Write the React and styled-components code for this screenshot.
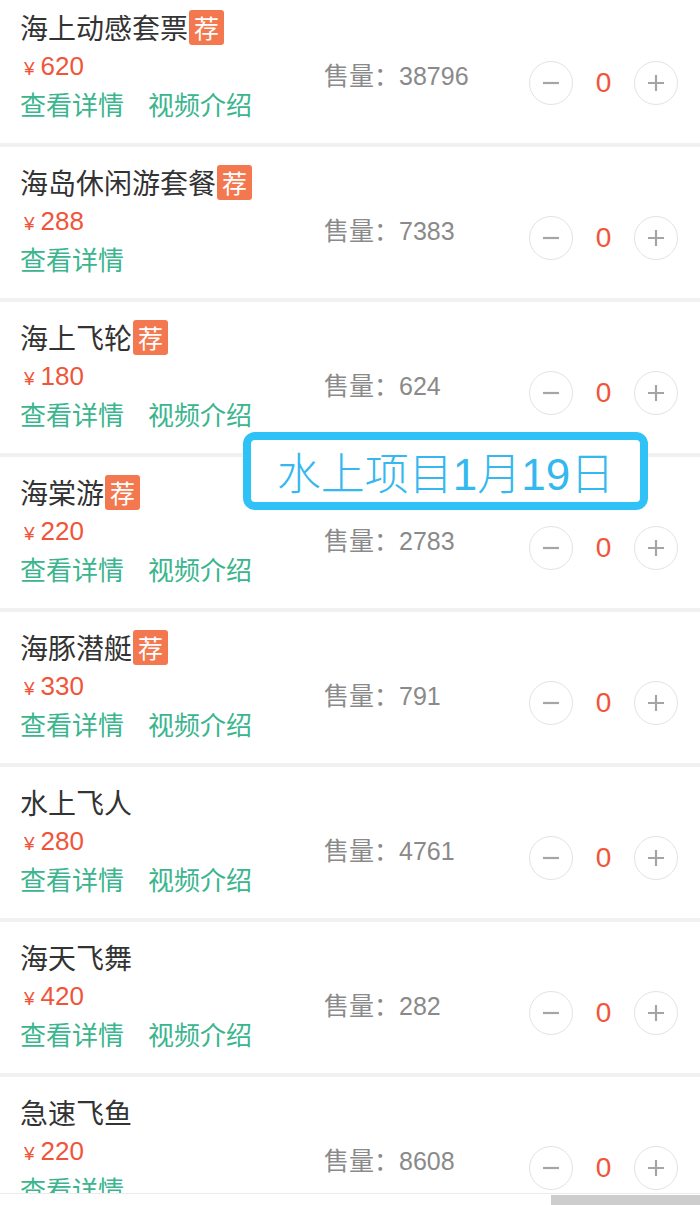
import React from 'react';
import styled, { createGlobalStyle } from 'styled-components';

const GlobalStyle = createGlobalStyle`
  html, body {
    margin: 0;
    padding: 0;
    background: #fff;
  }
  body {
    font-family: "Liberation Sans", "Noto Sans CJK SC", sans-serif;
  }
`;

const items = [
  { name: '海上动感套票', price: 620, sales: 38796, hot: true, video: true },
  { name: '海岛休闲游套餐', price: 288, sales: 7383, hot: true, video: false },
  { name: '海上飞轮', price: 180, sales: 624, hot: true, video: true },
  { name: '海棠游', price: 220, sales: 2783, hot: true, video: true },
  { name: '海豚潜艇', price: 330, sales: 791, hot: true, video: true },
  { name: '水上飞人', price: 280, sales: 4761, hot: false, video: true },
  { name: '海天飞舞', price: 420, sales: 282, hot: false, video: true },
  { name: '急速飞鱼', price: 220, sales: 8608, hot: false, video: false },
];

const App = () => {
  return (
    <Page>
      <GlobalStyle />
      <Viewport>
        <List>
          {items.map(el => (
            <Row key={el.name}>
              <Info>
                <Title>
                  {el.name}
                  {el.hot && <Badge>荐</Badge>}
                </Title>
                <Price>
                  <small>¥</small>{el.price}
                </Price>
                <Links>
                  <a>查看详情</a>
                  {el.video && <a>视频介绍</a>}
                </Links>
              </Info>
              <Sales>售量：{el.sales}</Sales>
              <Counter>
                <RoundBtn>
                  <svg width="22" height="22" viewBox="0 0 22 22">
                    <path d="M3 11h16" stroke="#a5a5a5" strokeWidth="2.2" />
                  </svg>
                </RoundBtn>
                <Count>0</Count>
                <RoundBtn>
                  <svg width="22" height="22" viewBox="0 0 22 22">
                    <path d="M3 11h16M11 3v16" stroke="#a5a5a5" strokeWidth="2.2" />
                  </svg>
                </RoundBtn>
              </Counter>
            </Row>
          ))}
        </List>
        <Stamp>水上项目1月19日</Stamp>
      </Viewport>
      <ScrollBar>
        <Thumb />
      </ScrollBar>
    </Page>
  );
};

const Page = styled.div`
  width: 700px;
  height: 1205px;
  display: flex;
  flex-direction: column;
  overflow: hidden;
`;

const Viewport = styled.div`
  position: relative;
  height: 1195px;
  overflow: hidden;
`;

const List = styled.div`
  margin-top: -8px;
`;

const Row = styled.div`
  display: flex;
  height: 151px;
  border-bottom: 4px solid #f1f1f1;
  box-sizing: content-box;
`;

const Info = styled.div`
  width: 304px;
  padding: 16px 0 0 20px;
  display: flex;
  flex-direction: column;
`;

const Title = styled.div`
  display: flex;
  align-items: center;
  height: 38px;
  font-size: 28px;
  color: #333;
  white-space: nowrap;
`;

const Badge = styled.span`
  display: inline-flex;
  align-items: center;
  justify-content: center;
  width: 35px;
  height: 35px;
  margin-left: 1px;
  border-radius: 3px;
  background: #f4784f;
  color: #fff;
  font-size: 25px;
`;

const Price = styled.div`
  height: 40px;
  line-height: 40px;
  padding-left: 4px;
  font-size: 26px;
  color: #f0553a;
  & small {
    font-size: 19px;
    margin-right: 6px;
  }
`;

const Links = styled.div`
  display: flex;
  gap: 24px;
  height: 40px;
  line-height: 40px;
  font-size: 26px;
  & a {
    color: #3ab58d;
  }
`;

const Sales = styled.div`
  flex: 1;
  padding-top: 67px;
  line-height: 34px;
  font-size: 25px;
  color: #8a8a8a;
  white-space: nowrap;
`;

const Counter = styled.div`
  display: flex;
  align-items: center;
  height: 44px;
  margin-top: 69px;
  padding-right: 22px;
`;

const RoundBtn = styled.div`
  width: 44px;
  height: 44px;
  border: 1px solid #e3e3e3;
  border-radius: 50%;
  box-sizing: border-box;
  display: flex;
  align-items: center;
  justify-content: center;
`;

const Count = styled.span`
  width: 61px;
  text-align: center;
  font-size: 28px;
  color: #f0553a;
`;

const Stamp = styled.div`
  position: absolute;
  left: 243px;
  top: 432px;
  width: 405px;
  height: 78px;
  box-sizing: border-box;
  border: 8px solid #2ec2f7;
  border-radius: 12px;
  background: #fff;
  color: #35b8ef;
  font-size: 44px;
  font-weight: 300;
  display: flex;
  align-items: center;
  justify-content: center;
  white-space: nowrap;
`;

const ScrollBar = styled.div`
  height: 10px;
  border-top: 1px solid #ececec;
  display: flex;
  justify-content: flex-end;
  padding-top: 1px;
`;

const Thumb = styled.div`
  width: 149px;
  background: #cdcdcd;
`;

export default App;
